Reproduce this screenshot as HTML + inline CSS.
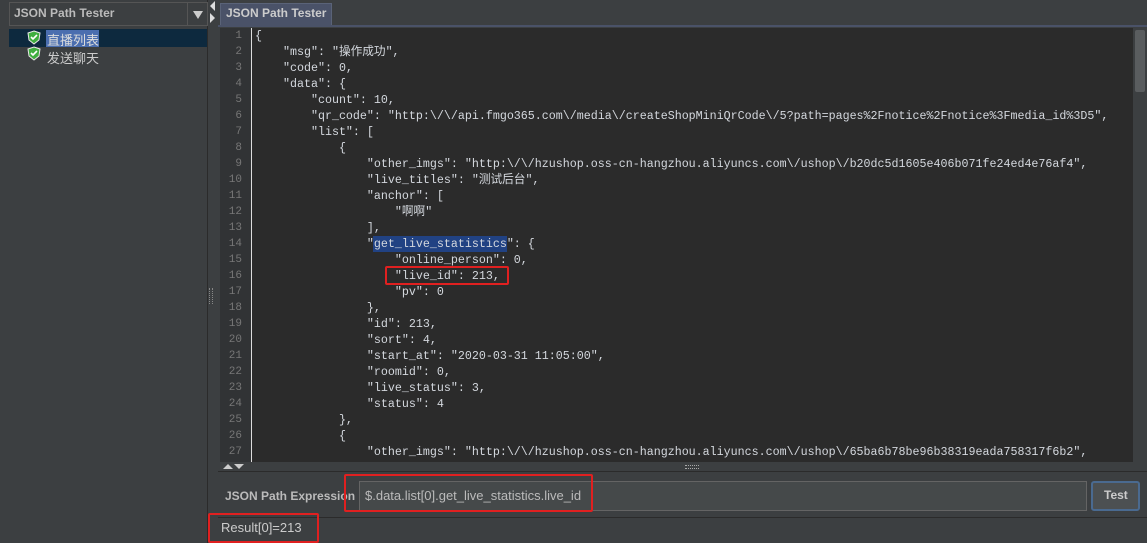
<!DOCTYPE html>
<html><head><meta charset="utf-8"><style>
*{margin:0;padding:0;box-sizing:border-box}
body{width:1147px;height:543px;background:#3c3f41;font-family:"Liberation Sans","Noto Sans CJK SC",sans-serif;color:#bbb;position:relative;overflow:hidden;font-size:12px}
.abs{position:absolute}
.code{font-family:"Liberation Mono","Noto Sans CJK SC",monospace;font-size:11.67px;line-height:16px;white-space:pre;color:#d4d8de}
.gut{font-family:"Liberation Mono",monospace;font-size:11px;line-height:16px;color:#777;text-align:right;white-space:pre}
.red{position:absolute;border:2px solid #e02020;border-radius:2px}
</style></head><body>
<div class="abs" style="left:0;top:0;width:208px;height:543px;background:#3c3f41;border-right:1px solid #2b2b2b"></div>
<div class="abs" style="left:9px;top:2px;width:199px;height:24px;border:1px solid #555;background:#3c3f41"></div>
<div class="abs" style="left:14px;top:6px;font-weight:bold;font-size:12px;color:#bbb">JSON Path Tester</div>
<div class="abs" style="left:187px;top:2px;width:1px;height:24px;background:#555"></div>
<div class="abs" style="left:193px;top:11px;width:0;height:0;border-left:5px solid transparent;border-right:5px solid transparent;border-top:8px solid #ccc"></div>
<div class="abs" style="left:9px;top:29px;width:198px;height:18px;background:#0d293e"></div>
<div class="abs" style="left:46px;top:30px;width:53px;height:17px;background:#4b6eaf"></div>
<svg class="abs" style="left:27px;top:30px" width="14" height="32" viewBox="0 0 14 32">
<path d="M7 1 L13 3 L12 10 L7 14 L2 10 L1 3Z" fill="#3fae3f" stroke="#e8e8e8" stroke-width="1"/>
<path d="M4 7 L6 9 L10 5" stroke="#fff" stroke-width="1.6" fill="none"/>
<path d="M7 17 L13 19 L12 26 L7 30 L2 26 L1 19Z" fill="#3fae3f" stroke="#e8e8e8" stroke-width="1"/>
<path d="M4 23 L6 25 L10 21" stroke="#fff" stroke-width="1.6" fill="none"/>
</svg>
<div class="abs" style="left:47px;top:30px;font-size:13px;color:#ddd">直播列表</div>
<div class="abs" style="left:47px;top:48px;font-size:13px;color:#ccc">发送聊天</div>
<div class="abs" style="left:209px;top:288px;width:4px;height:16px;border-left:1px dotted #888;border-right:1px dotted #888"></div>
<div class="abs" style="left:210px;top:1px;width:0;height:0;border-top:5px solid transparent;border-bottom:5px solid transparent;border-right:5px solid #ddd"></div>
<div class="abs" style="left:210px;top:13px;width:0;height:0;border-top:5px solid transparent;border-bottom:5px solid transparent;border-left:5px solid #ddd"></div>
<div class="abs" style="left:218px;top:0;width:929px;height:543px;background:#3c3f41"></div>
<div class="abs" style="left:220px;top:3px;width:112px;height:23px;background:#4a5268;border:1px solid #5a6378;border-bottom:none"></div>
<div class="abs" style="left:226px;top:6px;font-weight:bold;color:#ccc">JSON Path Tester</div>
<div class="abs" style="left:218px;top:25px;width:929px;height:2px;background:#4a5268"></div>
<div class="abs" style="left:220px;top:28px;width:927px;height:434px;background:#2b2b2b"></div>
<div class="abs" style="left:220px;top:28px;width:32px;height:434px;background:#313335;border-right:1px solid #ddd"></div>
<div class="abs gut" style="left:220px;top:28px;width:22px">1
2
3
4
5
6
7
8
9
10
11
12
13
14
15
16
17
18
19
20
21
22
23
24
25
26
27</div>
<div class="abs" style="left:373px;top:236px;width:134px;height:16px;background:#214283"></div>
<div class="abs code" style="left:255px;top:28px">{
    "msg": "操作成功",
    "code": 0,
    "data": {
        "count": 10,
        "qr_code": "http:\/\/api.fmgo365.com\/media\/createShopMiniQrCode\/5?path=pages%2Fnotice%2Fnotice%3Fmedia_id%3D5",
        "list": [
            {
                "other_imgs": "http:\/\/hzushop.oss-cn-hangzhou.aliyuncs.com\/ushop\/b20dc5d1605e406b071fe24ed4e76af4",
                "live_titles": "测试后台",
                "anchor": [
                    "啊啊"
                ],
                "get_live_statistics": {
                    "online_person": 0,
                    "live_id": 213,
                    "pv": 0
                },
                "id": 213,
                "sort": 4,
                "start_at": "2020-03-31 11:05:00",
                "roomid": 0,
                "live_status": 3,
                "status": 4
            },
            {
                "other_imgs": "http:\/\/hzushop.oss-cn-hangzhou.aliyuncs.com\/ushop\/65ba6b78be96b38319eada758317f6b2",</div>
<div class="abs" style="left:1133px;top:28px;width:14px;height:434px;background:#3c3f41"></div>
<div class="abs" style="left:1135px;top:30px;width:10px;height:62px;background:#5a5d5f;border-radius:2px"></div>
<div class="red" style="left:385px;top:266px;width:124px;height:19px"></div>
<div class="abs" style="left:218px;top:462px;width:929px;height:10px;background:#3c3f41;border-bottom:1px solid #2b2b2b"></div>
<div class="abs" style="left:223px;top:464px;width:0;height:0;border-left:5px solid transparent;border-right:5px solid transparent;border-bottom:5px solid #ccc"></div>
<div class="abs" style="left:234px;top:464px;width:0;height:0;border-left:5px solid transparent;border-right:5px solid transparent;border-top:5px solid #ccc"></div>
<div class="abs" style="left:685px;top:465px;width:14px;height:4px;border-top:1px dotted #aaa;border-bottom:1px dotted #aaa"></div>
<div class="abs" style="left:225px;top:489px;font-weight:bold;color:#bbb">JSON Path Expression</div>
<div class="abs" style="left:359px;top:481px;width:728px;height:30px;background:#45494a;border:1px solid #646464"></div>
<div class="abs" style="left:365px;top:488px;font-size:13px;color:#bbb">$.data.list[0].get_live_statistics.live_id</div>
<div class="abs" style="left:1091px;top:481px;width:49px;height:30px;background:#4c5052;border:2px solid #4a6a90;border-radius:3px"></div>
<div class="abs" style="left:1104px;top:488px;font-weight:bold;color:#ccc">Test</div>
<div class="red" style="left:344px;top:474px;width:249px;height:38px"></div>
<div class="abs" style="left:218px;top:517px;width:929px;height:1px;background:#2b2b2b"></div>
<div class="abs" style="left:221px;top:520px;font-size:13px;color:#ccc">Result[0]=213</div>
<div class="red" style="left:208px;top:513px;width:111px;height:30px"></div>
</body></html>
